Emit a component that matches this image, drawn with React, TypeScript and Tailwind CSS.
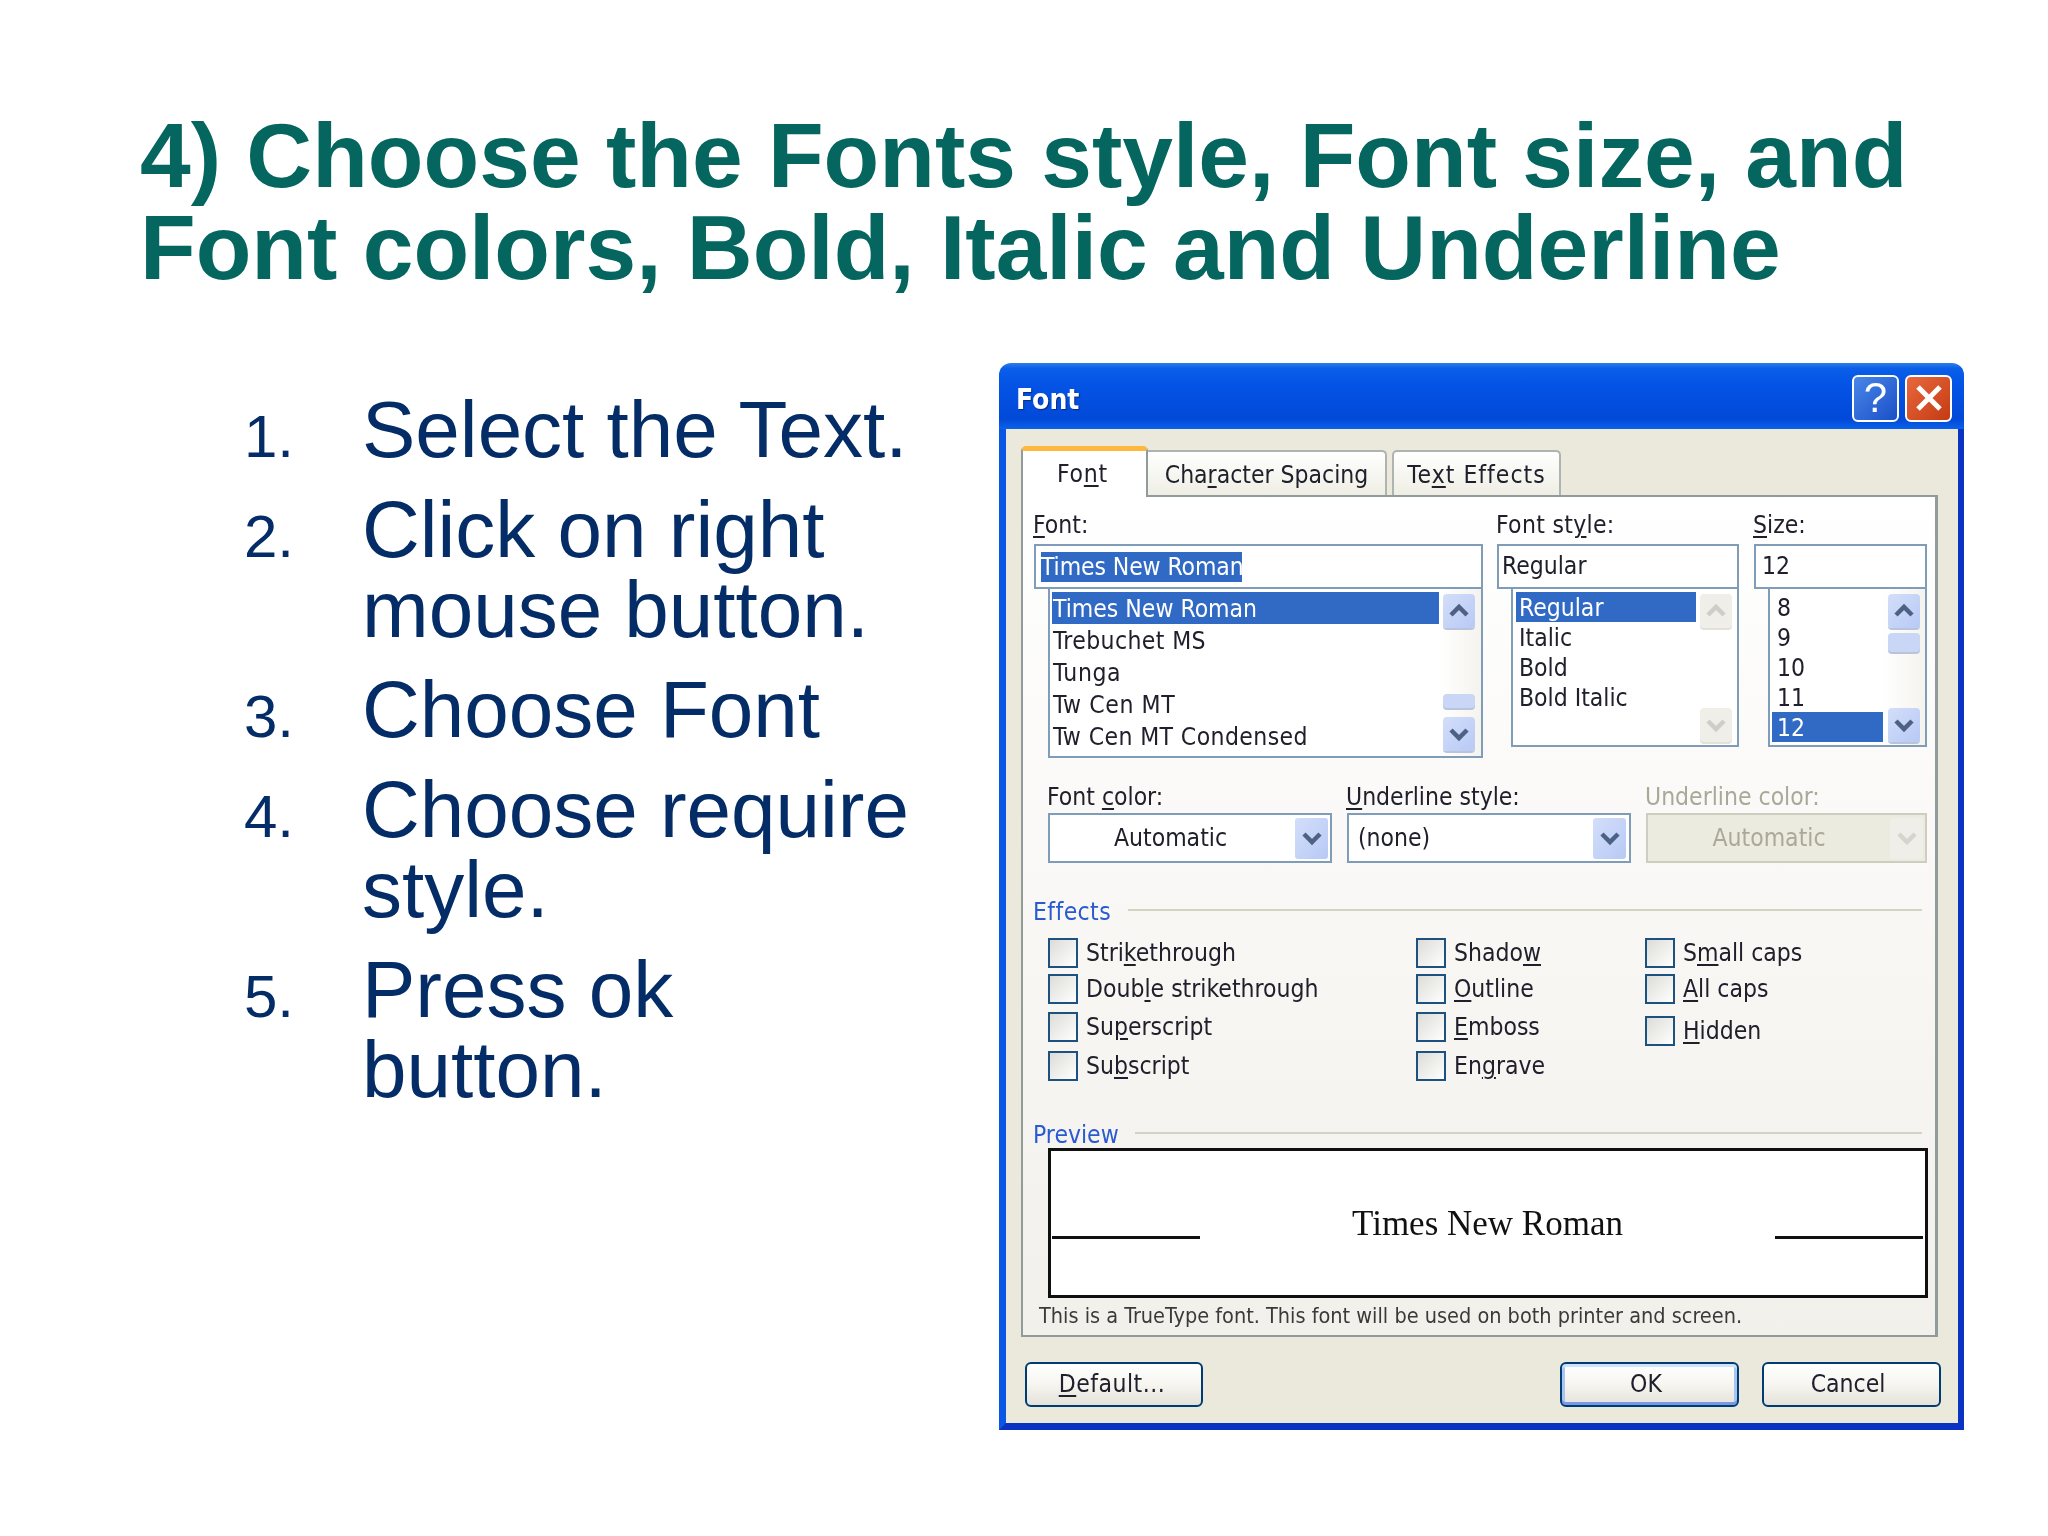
import React from "react";

const U = ({ children }: { children: React.ReactNode }) => (
  <u className="underline decoration-2 underline-offset-[3px]">{children}</u>
);

const Chevron = ({ up, color }: { up?: boolean; color: string }) => (
  <svg width="22" height="16" viewBox="0 0 22 16" fill="none">
    <path d={up ? "M3 12 L11 4 L19 12" : "M3 4 L11 12 L19 4"} stroke={color} strokeWidth="4.5" />
  </svg>
);

const ScrollBtn = ({ up, off }: { up?: boolean; off?: boolean }) => (
  <div
    className={
      off
        ? "w-[32px] h-[34px] flex items-center justify-center rounded-[4px] bg-[#efeee9] shadow-[0_2px_0_#e2e1da]"
        : "w-[32px] h-[34px] flex items-center justify-center rounded-[4px] bg-linear-to-br from-[#d3def9] to-[#b7c9f5] shadow-[0_2px_0_#b9c4dc]"
    }
  >
    <Chevron up={up} color={off ? "#cfcec6" : "#4d6185"} />
  </div>
);

const Thumb = ({ h }: { h: string }) => (
  <div className={`${h} w-[32px] rounded-[4px] bg-[#c9d6f6] shadow-[0_2px_0_#b9c4dc]`} />
);

const items = "whitespace-nowrap";

const Check = ({ label, className }: { label: React.ReactNode; className?: string }) => (
  <div className={`flex items-center h-[30px] ${className ?? ""}`}>
    <div className="w-[30px] h-[30px] border-[2.5px] border-[#1c5180] bg-linear-to-br from-[#dcdcd7] to-white" />
    <span className="ml-[8px] leading-[30px] whitespace-nowrap">{label}</span>
  </div>
);

const XpButton = ({ children, className }: { children: React.ReactNode; className: string }) => (
  <div
    className={`h-[45px] flex items-center justify-center rounded-[6px] border-2 border-[#003c74] bg-linear-to-b from-white via-[#f6f5f0] to-[#e4e2d8] ${className}`}
  >
    {children}
  </div>
);

const ComboBtn = ({ off }: { off?: boolean }) => (
  <div
    className={
      off
        ? "w-[33px] h-[41px] flex items-center justify-center rounded-[3px] bg-[#efeee9]"
        : "w-[33px] h-[41px] flex items-center justify-center rounded-[3px] bg-linear-to-br from-[#d3def9] to-[#b7c9f5]"
    }
  >
    <Chevron color={off ? "#d6d5cd" : "#4d6185"} />
  </div>
);

export default function App() {
  return (
    <div className="w-[2048px] h-[1536px] bg-white overflow-hidden font-['Liberation_Sans',Arial,sans-serif] pt-[109px] pl-[140px]">
      <h1 className="text-[91.15px] leading-[92px] font-bold text-[#04665f] whitespace-nowrap">
        <div>4) Choose the Fonts style, Font size, and</div>
        <div>Font colors, Bold, Italic and Underline</div>
      </h1>

      <div className="flex">
        <ol className="w-[859px] pl-[104px] pt-[97px] text-[#042c66] text-[80px] leading-[80px] flex flex-col gap-[20px]">
          {[
            ["1.", ["Select the Text."]],
            ["2.", ["Click on right", "mouse button."]],
            ["3.", ["Choose Font"]],
            ["4.", ["Choose require", "style."]],
            ["5.", ["Press ok", "button."]],
          ].map(([n, lines]) => (
            <li key={n as string} className="flex items-baseline">
              <span className="w-[118px] text-[60px] leading-[60px]">{n as string}</span>
              <span className="whitespace-nowrap">
                {(lines as string[]).map((l) => (
                  <div key={l}>{l}</div>
                ))}
              </span>
            </li>
          ))}
        </ol>

        {/* Font dialog */}
        <div className="mt-[70px] w-[965px] h-[1067px] flex flex-col blur-[0.5px] font-['DejaVu_Sans',sans-serif] [font-stretch:condensed] text-[24.5px] text-[#20202c]">
          <div className="h-[66px] shrink-0 flex items-center pl-[17px] pr-[12px] rounded-t-[12px] bg-[linear-gradient(180deg,#2f7fe8_0%,#0a5fe8_8%,#0454e6_30%,#0249d8_85%,#0a62ea_100%)]">
            <span className="text-white font-bold text-[28px] pt-[8px] [text-shadow:1px_1px_1px_#0a2a80]">Font</span>
            <div className="ml-auto flex gap-[6px] pt-[4px]">
              <div className="w-[47px] h-[47px] rounded-[6px] border-2 border-white bg-linear-to-br from-[#4a86e8] to-[#1b4fc8] flex items-center justify-center text-white text-[42px] font-['Liberation_Sans',sans-serif] leading-none">
                ?
              </div>
              <div className="w-[47px] h-[47px] rounded-[6px] border-2 border-white bg-linear-to-br from-[#e8683c] to-[#c43a12] flex items-center justify-center">
                <svg width="30" height="30" viewBox="0 0 30 30">
                  <path d="M4 4 L26 26 M26 4 L4 26" stroke="white" strokeWidth="5" />
                </svg>
              </div>
            </div>
          </div>

          <div className="flex-1 flex flex-col border-l-[7px] border-r-[6px] border-b-[7px] border-l-[#0a57e6] border-r-[#0a33c4] border-b-[#0a33c4] bg-[#ebe9dc] pl-[15px] pt-[17px]">
            {/* tabs */}
            <div className="flex items-end h-[51px] -mb-[2px] z-10">
              <div className="w-[127px] h-[51px] rounded-t-[5px] border-t-[5px] border-t-[#ffb83c] border-x-2 border-x-[#919b9c] bg-white flex items-start justify-center pt-[8px] pr-[4px]">
                <span className="leading-[30px] tracking-[0.8px]">
                  Fo<U>n</U>t
                </span>
              </div>
              <div className="w-[239px] h-[45px] mb-[2px] pt-[3px] rounded-tr-[5px] border-t-2 border-r-2 border-[#aeb5b0] bg-linear-to-b from-white to-[#efeee4] flex items-center justify-center">
                <span>
                  Cha<U>r</U>acter Spacing
                </span>
              </div>
              <div className="ml-[5px] w-[169px] h-[45px] mb-[2px] pt-[3px] rounded-t-[5px] border-t-2 border-x-2 border-[#aeb5b0] bg-linear-to-b from-white to-[#efeee4] flex items-center justify-center">
                <span className="tracking-[1px]">
                  Te<U>x</U>t Effects
                </span>
              </div>
            </div>

            {/* panel */}
            <div className="w-[917px] h-[842px] border-2 border-[#919b9c] border-r-[3px] bg-linear-to-b from-white to-[#f2f0eb] flex flex-col">
              <div className="flex items-start pl-[11px]">
                <div className="w-[449px]">
                  <div className="h-[47px] pt-[13px] leading-[30px] -ml-[1px]">
                    <U>F</U>ont:
                  </div>
                  <div className="h-[45px] border-2 border-[#7f9db9] bg-white flex items-center pl-[5px]">
                    <span className="bg-[#316ac5] text-white h-[30px] leading-[30px] w-[201px] tracking-[-0.1px] whitespace-nowrap">Times New Roman</span>
                  </div>
                  <div className="ml-[14px] h-[169px] border-2 border-t-0 border-[#7f9db9] bg-white flex">
                    <div className={`w-[387px] ml-[2px] pt-[3px] ${items}`}>
                      <div className="h-[32px] leading-[33px] bg-[#316ac5] text-white pl-[1px]">Times New Roman</div>
                      <div className="h-[32px] leading-[33px] pl-[1px] tracking-[0.4px]">Trebuchet MS</div>
                      <div className="h-[32px] leading-[33px] pl-[1px] tracking-[0.6px]">Tunga</div>
                      <div className="h-[32px] leading-[33px] pl-[1px] tracking-[0.6px]">Tw Cen MT</div>
                      <div className="h-[32px] leading-[33px] pl-[1px] tracking-[0.4px]">Tw Cen MT Condensed</div>
                    </div>
                    <div className="flex-1 flex flex-col pl-[4px] pt-[5px] pb-[5px] bg-linear-to-r from-white to-[#f4f3ee]">
                      <ScrollBtn up />
                      <div className="flex-1" />
                      <Thumb h="h-[14px]" />
                      <div className="h-[9px]" />
                      <ScrollBtn />
                    </div>
                  </div>
                </div>

                <div className="ml-[14px] w-[242px]">
                  <div className="h-[47px] pt-[13px] leading-[30px] -ml-[1px] tracking-[0.3px]">
                    Font st<U>y</U>le:
                  </div>
                  <div className="h-[45px] border-2 border-[#7f9db9] bg-white flex items-center pl-[3px]">
                    <span>Regular</span>
                  </div>
                  <div className="ml-[14px] h-[158px] border-2 border-t-0 border-[#7f9db9] bg-white flex">
                    <div className={`w-[180px] ml-[3px] pt-[3px] ${items}`}>
                      <div className="h-[30px] leading-[31px] bg-[#316ac5] text-white pl-[3px]">Regular</div>
                      <div className="h-[30px] leading-[31px] pl-[3px]">Italic</div>
                      <div className="h-[30px] leading-[31px] pl-[3px]">Bold</div>
                      <div className="h-[30px] leading-[31px] pl-[3px]">Bold Italic</div>
                    </div>
                    <div className="flex-1 flex flex-col justify-between pl-[4px] pt-[5px] pb-[3px]">
                      <ScrollBtn up off />
                      <ScrollBtn off />
                    </div>
                  </div>
                </div>

                <div className="ml-[15px] w-[173px]">
                  <div className="h-[47px] pt-[13px] leading-[30px] -ml-[1px]">
                    <U>S</U>ize:
                  </div>
                  <div className="h-[45px] border-2 border-[#7f9db9] bg-white flex items-center pl-[6px]">
                    <span>12</span>
                  </div>
                  <div className="ml-[14px] h-[158px] border-2 border-t-0 border-[#7f9db9] bg-white flex">
                    <div className={`w-[111px] ml-[2px] pt-[3px] ${items}`}>
                      <div className="h-[30px] leading-[31px] pl-[5px]">8</div>
                      <div className="h-[30px] leading-[31px] pl-[5px]">9</div>
                      <div className="h-[30px] leading-[31px] pl-[5px]">10</div>
                      <div className="h-[30px] leading-[31px] pl-[5px]">11</div>
                      <div className="h-[30px] leading-[31px] pl-[5px] bg-[#316ac5] text-white">12</div>
                    </div>
                    <div className="flex-1 flex flex-col pl-[5px] pt-[5px] pb-[3px] bg-linear-to-r from-white to-[#f4f3ee]">
                      <ScrollBtn up />
                      <div className="h-[5px]" />
                      <Thumb h="h-[19px]" />
                      <div className="flex-1" />
                      <ScrollBtn />
                    </div>
                  </div>
                </div>
              </div>

              {/* combos */}
              <div className="flex pl-[25px] mt-[24px] gap-[15px]">
                <div className="w-[284px]">
                  <div className="h-[31px] leading-[30px] -ml-[1px]">
                    Font <U>c</U>olor:
                  </div>
                  <div className="h-[50px] border-2 border-[#7f9db9] bg-white flex items-center pr-[2px]">
                    <span className="flex-1 text-center pr-[4px]">Automatic</span>
                    <ComboBtn />
                  </div>
                </div>
                <div className="w-[284px]">
                  <div className="h-[31px] leading-[30px] -ml-[1px]">
                    <U>U</U>nderline style:
                  </div>
                  <div className="h-[50px] border-2 border-[#7f9db9] bg-white flex items-center pl-[9px] pr-[3px]">
                    <span className="flex-1">(none)</span>
                    <ComboBtn />
                  </div>
                </div>
                <div className="w-[281px] text-[#aca899]">
                  <div className="h-[31px] leading-[30px] -ml-[1px]">Underline color:</div>
                  <div className="h-[50px] border-2 border-[#cfcdc0] bg-[#ecebdf] flex items-center pr-[2px]">
                    <span className="flex-1 text-center">Automatic</span>
                    <ComboBtn off />
                  </div>
                </div>
              </div>

              {/* effects */}
              <div className="mt-[34px] h-[30px] flex items-center pl-[10px] pr-[13px] text-[#2a5ad0]">
                <span className="leading-[30px] tracking-[0.4px]">Effects</span>
                <div className="ml-[17px] -mt-[4px] flex-1 h-[2px] bg-[#d3d2c3]" />
              </div>

              <div className="flex pl-[25px] mt-[11px]">
                <div className="w-[368px]">
                  <Check label={<>Stri<U>k</U>ethrough</>} />
                  <Check className="mt-[6px]" label={<>Doub<U>l</U>e strikethrough</>} />
                  <Check className="mt-[8px]" label={<>Su<U>p</U>erscript</>} />
                  <Check className="mt-[9px]" label={<>Su<U>b</U>script</>} />
                </div>
                <div className="w-[229px]">
                  <Check label={<>Shado<U>w</U></>} />
                  <Check className="mt-[6px]" label={<><U>O</U>utline</>} />
                  <Check className="mt-[8px]" label={<><U>E</U>mboss</>} />
                  <Check className="mt-[9px]" label={<>En<U>g</U>rave</>} />
                </div>
                <div>
                  <Check label={<>S<U>m</U>all caps</>} />
                  <Check className="mt-[6px]" label={<><U>A</U>ll caps</>} />
                  <Check className="mt-[12px]" label={<><U>H</U>idden</>} />
                </div>
              </div>

              {/* preview */}
              <div className="mt-[39px] h-[30px] flex items-center pl-[10px] pr-[13px] text-[#2a5ad0]">
                <span className="leading-[30px]">Preview</span>
                <div className="ml-[16px] -mt-[4px] flex-1 h-[2px] bg-[#d3d2c3]" />
              </div>

              <div className="-mt-[2px] ml-[25px] w-[880px] h-[150px] border-[3px] border-[#101010] bg-white flex items-end justify-between pl-[1px] pr-[2px] pb-[51px]">
                <div className="w-[148px] h-[3px] bg-[#101010] mb-[5px]" />
                <span className="font-['Liberation_Serif',serif] [font-stretch:normal] text-[35px] leading-[40px] text-[#111]">Times New Roman</span>
                <div className="w-[148px] h-[3px] bg-[#101010] mb-[5px]" />
              </div>

              <div className="mt-[3px] pl-[16px] leading-[30px] text-[21.5px] text-[#3a3a3a] whitespace-nowrap">
                This is a TrueType font. This font will be used on both printer and screen.
              </div>
            </div>

            {/* buttons */}
            <div className="flex mt-[25px] pl-[4px]">
              <XpButton className="w-[178px] pr-[4px]">
                <span className="tracking-[0.5px]">
                  <U>D</U>efault...
                </span>
              </XpButton>
              <XpButton className="ml-[357px] w-[179px] pr-[7px] shadow-[inset_0_3px_0_#cfe3fb,inset_0_-3px_0_#7a98e4,inset_3px_0_0_#a9c4f2,inset_-3px_0_0_#a9c4f2]">
                OK
              </XpButton>
              <XpButton className="ml-[23px] w-[179px] pr-[7px]">Cancel</XpButton>
            </div>
          </div>
        </div>
      </div>
    </div>
  );
}
